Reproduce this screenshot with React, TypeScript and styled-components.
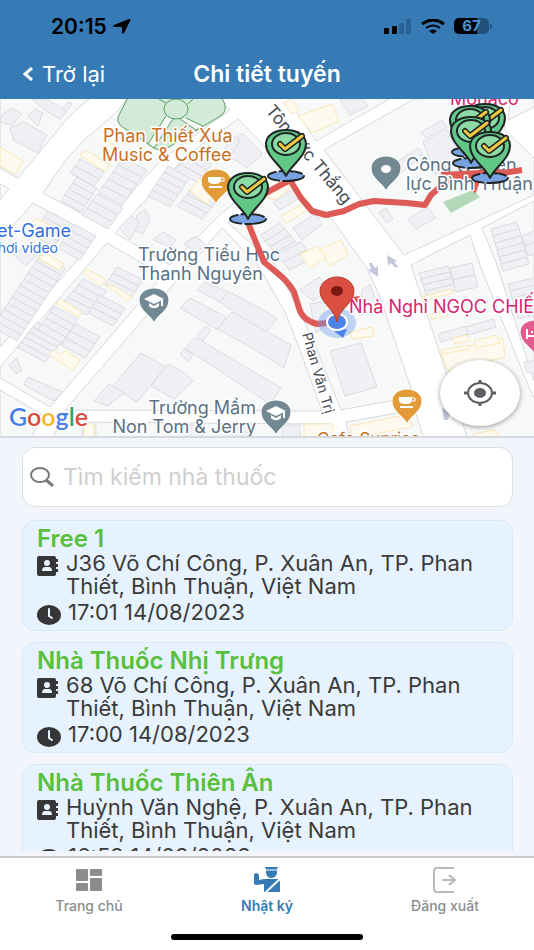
import React from "react";
import styled, { createGlobalStyle } from "styled-components";

const GlobalStyle = createGlobalStyle`
  *, *::before, *::after { box-sizing: border-box; }
  body { margin: 0; background: #f2f6fc; }
  body, button, input { font-family: Inter, "Noto Sans", sans-serif; }
  h1, h2, p { margin: 0; }
`;

const Screen = styled.div`
  display: grid;
  grid-template-rows: auto minmax(0, 339fr) minmax(0, 418fr) auto;
  height: 100vh;
  overflow: hidden;
  background: #f2f6fc;
`;

/* ---------- top ---------- */

const TopBar = styled.header`
  background: #367ab6;
  color: #fff;
`;

const StatusBar = styled.div`
  display: flex;
  align-items: center;
  justify-content: space-between;
  height: 52px;
  padding: 0 42px 0 51px;
  color: #000;
`;

const StatusGroup = styled.div<{ $gap: number }>`
  display: flex;
  align-items: center;
  gap: ${(p) => p.$gap}px;
`;

const Clock = styled.span`
  font-size: 21px;
  font-weight: 600;
`;

const Battery = styled.div`
  display: flex;
  align-items: center;
  gap: 1px;
`;

const BatteryBody = styled.div`
  width: 35px;
  height: 16px;
  border-radius: 5px;
  background: linear-gradient(90deg, #000 67%, #22527b 67%);
  color: #4a93d2;
  font-size: 15px;
  font-weight: 700;
  line-height: 16px;
  text-align: center;
`;

const BatteryTip = styled.div`
  width: 2px;
  height: 5px;
  border-radius: 0 2px 2px 0;
  background: #22527b;
`;

const TitleBar = styled.div`
  display: grid;
  grid-template-columns: 1fr auto 1fr;
  align-items: center;
  height: 47px;
  padding: 0 22px 4px;
`;

const BackButton = styled.button`
  display: flex;
  align-items: center;
  justify-self: start;
  gap: 8px;
  padding: 0;
  border: 0;
  background: none;
  color: #fff;
  font-size: 22px;
  line-height: 26px;
`;

const PageTitle = styled.h1`
  font-size: 23px;
  font-weight: 600;
  line-height: 26px;
`;

/* ---------- map ---------- */

const MapArea = styled.section`
  position: relative;
  overflow: hidden;
  border-bottom: 2px solid #d6d9dc;
  background: #fff;
`;

const MapDrawing = styled.svg`
  display: block;
  width: 100%;
  height: 100%;
`;

const LocateButton = styled.button`
  position: absolute;
  right: 14px;
  bottom: 10px;
  display: flex;
  align-items: center;
  justify-content: center;
  width: 80px;
  height: 66px;
  padding: 0;
  border: 0;
  border-radius: 50%;
  background: #fff;
  box-shadow: 0 1px 5px rgba(0, 0, 0, 0.4);
`;

const Label = styled.text<{ $color: string; $size?: number; $weight?: number }>`
  fill: ${(p) => p.$color};
  font-family: Inter, "Noto Sans", sans-serif;
  font-size: ${(p) => p.$size ?? 18}px;
  font-weight: ${(p) => p.$weight ?? 400};
  stroke: #fff;
  stroke-width: 3px;
  stroke-linejoin: round;
  paint-order: stroke;
`;

const Brand = styled.text`
  font-family: Lato, sans-serif;
  font-size: 25px;
  font-weight: 600;
  stroke: #fff;
  stroke-width: 3px;
  paint-order: stroke;
`;

const blocks = [
  "0,90 100,90 75,111 63,124 18,178 0,168",
  "0,184 9,189 0,200",
  "43,193 65,161 83,141 118,111 133,90 205,90 230,110 187,141 160,161 133,191 105,226",
  "238,119 187,155 115,233 170,265 222,213 283,165",
  "290,180 228,223 275,265 300,312 315,345 341,410 411,397 411,388 379,295 367,268 331,218 314,213",
  "65,410 222,228 258,265 285,312 300,350 322,411",
  "33,203 95,236 73,265 0,347 0,240",
  "107,243 163,275 50,407 0,378 0,367",
  "0,390 43,415 30,440 0,440",
  "60,422 330,424 334,440 52,440",
  "346,422 415,410 424,440 350,440",
  "282,90 316,141 405,90",
  "324,150 414,99 500,96 505,130 534,158 534,195 404,255",
  "512,90 534,90 534,107 508,120",
  "411,265 470,235 481,268 528,385 540,410 540,440 468,440",
  "482,228 534,201 534,381 497,265",
];

type Terrace = [number, number, number, number, number, number, number];

/* x, y of the first corner, length vector, step vector, count */
const terraces: Terrace[] = [
  [61, 201, 20, 11, 4, -6, 4],
  [70, 173, 24, 13, 5, -7, 2],
  [82, 215, 26, 14, 5, -7, 3],
  [98, 193, 24, 12, 5, -7, 5],
  [148, 196, 22, 11, 4, -6, 5],
  [177, 206, 25, 13, 5, -6, 3],
  [175, 170, 22, 12, 5, -6, 3],
  [17, 347, 28, 15, 4, -5, 5],
  [38, 330, 24, 13, 4, -6, 4],
  [63, 303, 24, 12, 5, -6, 4],
  [88, 313, 25, 13, 4, -6, 3],
  [61, 345, 24, 13, 5, -7, 3],
  [105, 285, 26, 13, 4, -6, 3],
  [-8, 327, 25, 14, 4, -6, 12],
  [32, 235, 22, 12, 4, -6, 4],
  [58, 248, 22, 12, 4, -6, 4],
  [260, 235, 20, -12, 5, 6, 4],
  [277, 254, 24, -12, 6, 8, 2],
  [419, 273, 29, -7, 2, 6, 4],
  [450, 268, 22, -5, 3, 12, 2],
  [491, 229, 26, -7, 2, 7, 6],
  [508, 284, 26, -6, 2, 7, 5],
  [522, 236, 20, -8, 3, 10, 2],
  [438, 334, 28, -8, 3, 8, 1],
  [466, 327, 27, -8, 3, 8, 1],
];

const buildings = [
  "10,128 24,122 47,135 38,153 14,141",
  "2,115 12,108 22,114 12,125 0,122",
  "28,117 35,109 43,113 38,126",
  "32,99 46,99 67,111 60,119 48,112",
  "62,109 68,102 72,104 66,112",
  "232,142 242,133 263,154 247,168 231,157",
  "225,148 232,135 240,140 232,154",
  "137,215 145,209 150,219 143,234 135,231",
  "119,228 131,216 139,222 130,240",
  "153,240 163,232 176,240 170,247",
  "421,132 442,120 447,127 426,138",
  "423,142 447,129 465,168 437,178",
  "394,164 418,148 423,155 397,176",
  "379,212 386,208 393,219 387,223",
  "408,219 428,207 436,218 416,229",
  "340,99 362,99 368,106 350,115",
  "273,203 291,190 301,197 280,210",
  "293,228 315,214 322,224 302,240",
  "300,290 319,277 330,290 313,301",
  "330,351 361,343 377,387 345,396",
  "362,290 370,284 379,310 360,315",
  "310,304 333,300 338,317 316,333",
  "113,386 141,353 166,367 137,402",
  "151,386 168,364 183,372 193,381 174,399",
  "94,401 109,384 124,393 108,406",
  "180,308 190,298 226,317 218,330",
  "197,290 205,282 228,292 220,302",
  "220,302 228,292 240,297 277,318 264,335",
  "218,329 232,312 291,345 284,368 252,348",
  "185,348 195,337 281,388 270,404",
  "197,335 206,326 211,330 203,341",
  "180,354 184,349 193,354 189,362",
  "9,365 16,358 22,370 16,374",
  "28,377 62,392 54,401 24,385",
  "14,255 30,242 42,251 25,266",
  "184,244 196,236 206,245 196,253",
  "84,425 96,425 96,440 80,440",
  "186,425 204,425 204,440 186,440",
  "226,425 248,425 248,440 226,440",
  "282,425 300,425 300,440 282,440",
  "524,362 540,360 540,375 526,372",
];

const parcels = [
  "0,147 23,161 15,174 0,166",
  "80,155 86,150 110,165 104,171",
  "101,146 107,141 120,148 114,154",
  "190,191 199,178 216,190 207,204",
  "298,116 332,104 339,121 312,133",
  "283,103 292,99 299,110 292,114",
  "266,197 284,182 290,188 275,200",
  "281,216 303,204 308,210 286,223",
  "318,250 341,240 348,255 330,266",
  "300,254 318,246 326,258 310,268",
  "83,273 87,269 106,280 102,286",
  "56,303 60,299 82,312 79,317",
  "107,286 112,285 132,297 128,301",
  "49,355 54,350 60,355 66,351 80,360 73,370",
  "30,225 36,218 51,226 46,233",
  "38,258 45,253 64,264 59,270",
  "350,332 372,327 374,336 352,339",
  "422,297 451,289 453,293 424,300",
  "430,315 446,311 448,316 432,319",
  "441,353 503,338 505,357 448,371",
  "441,350 469,345 469,349 443,354",
  "474,341 497,335 500,343 476,348",
  "453,338 467,335 469,341 455,344",
  "350,426 410,414 412,427 353,438",
  "84,424 94,424 93,440 84,440",
  "304,424 333,424 333,440 304,440",
  "473,434 495,430 502,440 475,440",
];

const terraceUnits = terraces.flatMap(([x, y, ux, uy, vx, vy, n]) =>
  Array.from({ length: n }, (_, i) => {
    const ax = x + vx * i;
    const ay = y + vy * i;
    return `${ax},${ay} ${ax + ux},${ay + uy} ${ax + ux + vx},${ay + uy + vy} ${ax + vx},${ay + vy}`;
  }),
);

const visits: [number, number][] = [
  [485, 119],
  [470, 121],
  [471, 132],
  [248, 188],
  [286, 145],
  [490, 147],
];

function VisitPin({ x, y }: { x: number; y: number }) {
  return (
    <g transform={`translate(${x} ${y})`} stroke="#1e2524" strokeWidth="2" strokeLinejoin="round" strokeLinecap="round">
      <ellipse cx="0" cy="31" rx="18" ry="5" fill="#78a2e2" strokeDasharray="22 4" />
      <path d="M0 31C-4 21-20 12-20-1C-20-9-12-15 0-15S20-9 20-1C20 12 4 21 0 31Z" fill="#62c887" />
      <ellipse cx="0" cy="-1" rx="14" ry="11" fill="#8cdaa5" />
      <path d="M-6-1L-1 4L16-9" fill="none" strokeWidth="6" />
      <path d="M-6-1L-1 4L16-9" fill="none" stroke="#f1c843" strokeWidth="3" />
    </g>
  );
}

function PlacePin({ x, y, color, children }: { x: number; y: number; color: string; children?: React.ReactNode }) {
  return (
    <g transform={`translate(${x} ${y})`}>
      <path
        d="M0 22C-3 14-15 10-15-1C-15-8-8-13 0-13S15-8 15-1C15 10 3 14 0 22Z"
        fill={color}
        stroke="#fff"
        strokeWidth="1"
      />
      {children}
    </g>
  );
}

const cup = (
  <g fill="none" stroke="#fff">
    <path d="M-8-5H5V-2C5 1 2 2-1 2H-2C-5 2-8 1-8-2Z" fill="#fff" stroke="none" />
    <path d="M4-4H8V-1H4" strokeWidth="1" />
    <path d="M-7 5H6" strokeWidth="2" />
  </g>
);

const cap = (
  <g fill="#fff">
    <path d="M-10-2L0-7L10-2L0 3Z" />
    <path d="M-5 2L0 5L5 2V5C2 8-2 8-5 5Z" />
    <path d="M7-1H9V5H7Z" />
  </g>
);

function RouteMap() {
  const slate = "#5a7183";
  const orange = "#c8701f";
  return (
    <MapDrawing viewBox="0 99 534 337" preserveAspectRatio="xMidYMid slice" role="img" aria-label="Bản đồ tuyến">
      <rect x="-200" y="-200" width="1000" height="1000" fill="#fff" />
      <g fill="#f7f9f9" stroke="#d6d8df" strokeWidth="1">
        {blocks.map((p) => (
          <polygon key={p} points={p} />
        ))}
      </g>
      <path d="M132 90L120 113Q114 122 124 128L154 148Q160 152 169 147L222 115Q228 109 223 100L218 90Z" fill="#d3ead9" />
      <g fill="#f7f9f9" stroke="#559e60" strokeWidth="1">
        <path d="M132 90L120 113Q114 122 124 128L154 148Q160 152 169 147L222 115Q228 109 223 100L218 90Z" fill="none" />
        <path d="M154 96L166 103M186 118L203 126L196 130L180 119M188 104L202 90M166 116L148 144L154 148L173 119" />
        <ellipse cx="176" cy="109" rx="12" ry="10" fill="#d3ead9" />
      </g>
      <g fill="#eff0f3" stroke="#dadce0" strokeWidth="1">
        {[...terraceUnits, ...buildings].map((p) => (
          <polygon key={p} points={p} />
        ))}
      </g>
      <g fill="#fffaf0" stroke="#fae6b4" strokeWidth="1">
        {parcels.map((p) => (
          <polygon key={p} points={p} />
        ))}
      </g>
      <polygon points="443,202 473,190 480,197 451,213" fill="#b2d8b8" />
      <g fill="#c2c8dc">
        <path d="M387 255L397 261L394 262L398 266L396 268L391 263L388 266Z" />
        <path d="M378 277L368 270L371 269L369 263L372 263L375 268L378 266Z" />
        <path d="M442 408L450 412L448 420L444 420Z" />
      </g>

      <Label $color="#454a50" $size={17} transform="translate(265 111) rotate(50)">
        Tôn Đức Thắng
      </Label>
      <Label $color="#454a50" $size={14} transform="translate(302 334) rotate(74)">
        Phan Văn Trị
      </Label>
      <Label $color={orange} x="103" y="142">Phan Thiết Xưa</Label>
      <Label $color={orange} x="102" y="161">Music &amp; Coffee</Label>
      <Label $color={slate} x="138" y="261">Trường Tiểu Học</Label>
      <Label $color={slate} x="138" y="280">Thanh Nguyên</Label>
      <Label $color={slate} x="256" y="414" textAnchor="end">Trường Mầm</Label>
      <Label $color={slate} x="256" y="433" textAnchor="end">Non Tom &amp; Jerry</Label>
      <Label $color="#326fe0" x="71" y="237" textAnchor="end">Net-Game</Label>
      <Label $color="#326fe0" $size={14} x="58" y="253" textAnchor="end">Chơi video</Label>
      <Label $color={orange} $size={17} x="317" y="445">Cafe Sunrise</Label>
      <Label $color="#d6246e" x="450" y="105">Monaco</Label>
      <Label $color={slate} x="406" y="171">Công ty Điện</Label>

      <g fill="none" stroke="#de5a57" strokeWidth="6" strokeLinejoin="round">
        <path d="M337 322L317 324Q302 320 299 308L294 292Q288 281 276 272L264 262L246 218L264 194L290 180L301 198L312 211L326 215L344 211L359 204L374 201L407 203L425 205L431 195L441 186L464 176L490 175L522 170" />
        <path d="M441 175L500 172M478 178L473 192M335 318V302L360 299" />
      </g>

      <Label $color={slate} x="406" y="190">lực Bình Thuận</Label>

      <PlacePin x={216} y={182} color="#e29b37">{cup}</PlacePin>
      <PlacePin x={407} y={402} color="#e29b37">{cup}</PlacePin>
      <PlacePin x={154} y={301} color="#728994">{cap}</PlacePin>
      <PlacePin x={276} y={413} color="#728994">{cap}</PlacePin>
      <PlacePin x={386} y={169} color="#728994">
        <ellipse cx="0" cy="0" rx="5" ry="4" fill="#fff" />
      </PlacePin>
      <PlacePin x={535} y={333} color="#e05c90">
        <path d="M-8-4V6M-8 3H6M-4-1H-2" stroke="#fff" strokeWidth="2" />
      </PlacePin>

      {visits.map(([x, y]) => (
        <VisitPin key={`${x}-${y}`} x={x} y={y} />
      ))}

      <ellipse cx="337" cy="323" rx="19" ry="15" fill="#6c9cf2" opacity="0.4" />
      <path d="M334 331L347 329L343 338Z" fill="#4c83ea" />
      <ellipse cx="337" cy="322" rx="10" ry="8" fill="#4c83ea" stroke="#fff" strokeWidth="2" />
      <Label $color="#d6246e" x="349" y="313">Nhà Nghỉ NGỌC CHIẾN</Label>
      <path d="M337 322C335 309 320 303 320 291C320 283 328 277 337 277S354 283 354 291C354 303 339 309 337 322Z" fill="#d94f40" stroke="#b63a2e" strokeWidth="1" />
      <ellipse cx="337" cy="291" rx="6" ry="5" fill="#7a1913" />

      <Brand x="9" y="426">
        <tspan fill="#4a7fe8">G</tspan>
        <tspan fill="#dc4a3d">o</tspan>
        <tspan fill="#f1b92a">o</tspan>
        <tspan fill="#4a7fe8">g</tspan>
        <tspan fill="#3ba258">l</tspan>
        <tspan fill="#dc4a3d">e</tspan>
      </Brand>
    </MapDrawing>
  );
}

/* ---------- list ---------- */

const ListPane = styled.main`
  display: flex;
  flex-direction: column;
  gap: 13px;
  padding: 9px 21px 5px 22px;
`;

const SearchBox = styled.label`
  display: flex;
  flex: none;
  align-items: center;
  gap: 9px;
  height: 60px;
  padding: 0 7px;
  border: 1px solid #dfdfe1;
  border-radius: 13px;
  background: #fff;
`;

const SearchInput = styled.input`
  flex: 1;
  min-width: 0;
  padding: 0;
  border: 0;
  outline: 0;
  background: none;
  color: #3c3c3c;
  font-size: 23px;
  &::placeholder { color: #cfcfcf; opacity: 1; }
`;

const Cards = styled.ul`
  display: flex;
  flex: 1;
  flex-direction: column;
  gap: 11px;
  min-height: 0;
  margin: 0;
  padding: 0;
  overflow-y: auto;
  scrollbar-width: none;
  list-style: none;
`;

const Card = styled.li`
  flex: none;
  padding: 5px 14px;
  border: 1px solid #d4eafb;
  border-radius: 13px;
  background: #e6f3fe;
`;

const CardTitle = styled.h2`
  color: #5abf3d;
  font-size: 24px;
  font-weight: 600;
  line-height: 26px;
`;

const CardRow = styled.div<{ $gap: number }>`
  display: flex;
  align-items: flex-start;
  gap: ${(p) => p.$gap}px;
  color: #3a3a3a;
  font-size: 22px;
  line-height: 23px;
  & > svg { flex: none; margin-top: 4px; }
  & + & { margin-top: 3px; }
`;

function AddressIcon() {
  return (
    <svg width="21" height="20" viewBox="0 0 21 20" aria-hidden="true">
      <rect width="19" height="20" rx="2" fill="#363638" />
      <path d="M19 3h2v3h-2zM19 8h2v3h-2zM19 13h2v3h-2z" fill="#363638" />
      <ellipse cx="10" cy="7" rx="3" ry="3" fill="#e6f3fe" />
      <path d="M5 15Q5 11 8 11H12Q15 11 15 15Z" fill="#e6f3fe" />
    </svg>
  );
}

function TimeIcon() {
  return (
    <svg width="24" height="20" viewBox="0 0 24 20" aria-hidden="true">
      <ellipse cx="12" cy="10" rx="12" ry="10" fill="#363638" />
      <path d="M12 4V11L15 13" fill="none" stroke="#e6f3fe" strokeWidth="2" strokeLinecap="round" />
    </svg>
  );
}

const stops = [
  { name: "Free 1", address: "J36 Võ Chí Công, P. Xuân An, TP. Phan Thiết, Bình Thuận, Việt Nam", time: "17:01 14/08/2023" },
  { name: "Nhà Thuốc Nhị Trưng", address: "68 Võ Chí Công, P. Xuân An, TP. Phan Thiết, Bình Thuận, Việt Nam", time: "17:00 14/08/2023" },
  { name: "Nhà Thuốc Thiên Ân", address: "Huỳnh Văn Nghệ, P. Xuân An, TP. Phan Thiết, Bình Thuận, Việt Nam", time: "16:59 14/08/2023" },
];

/* ---------- bottom ---------- */

const BottomBar = styled.footer`
  border-top: 2px solid #c9ccd2;
  background: #fff;
`;

const Tabs = styled.nav`
  display: grid;
  grid-template-columns: repeat(3, 1fr);
  padding-top: 9px;
`;

const Tab = styled.a<{ $active?: boolean }>`
  display: flex;
  flex-direction: column;
  align-items: center;
  gap: 4px;
  color: ${(p) => (p.$active ? "#367ab6" : "#8c8c8c")};
  font-size: 14px;
  font-weight: ${(p) => (p.$active ? 600 : 500)};
  line-height: 18px;
  text-decoration: none;
`;

const HomeIndicator = styled.div`
  width: 36%;
  height: 6px;
  margin: 19px auto 10px;
  border-radius: 3px;
  background: #000;
`;

export default function App() {
  return (
    <Screen>
      <GlobalStyle />
      <TopBar>
        <StatusBar>
          <StatusGroup $gap={6}>
            <Clock>20:15</Clock>
            <svg width="18" height="15" viewBox="0 0 18 15" aria-hidden="true">
              <path d="M16 0Q18 0 17 2L11 14Q9 16 9 13V8H1Q-1 7 1 6Z" fill="#000" />
            </svg>
          </StatusGroup>
          <StatusGroup $gap={9}>
            <svg width="28" height="15" viewBox="0 0 28 15" aria-hidden="true">
              <rect x="0" y="9" width="5" height="6" rx="1" />
              <rect x="8" y="7" width="5" height="8" rx="1" />
              <rect x="15" y="4" width="5" height="11" rx="1" fill="#2a6393" />
              <rect x="22" y="0" width="5" height="15" rx="1" fill="#2a6393" />
            </svg>
            <svg width="24" height="15" viewBox="0 0 24 15" aria-hidden="true" fill="none" stroke="#000">
              <path d="M1 5Q12-3 23 5" strokeWidth="3" />
              <path d="M5 9Q12 4 19 9" strokeWidth="2" />
              <path d="M8 12Q12 9 16 12L12 15Z" fill="#000" stroke="none" />
            </svg>
            <Battery>
              <BatteryBody>67</BatteryBody>
              <BatteryTip />
            </Battery>
          </StatusGroup>
        </StatusBar>
        <TitleBar>
          <BackButton type="button">
            <svg width="12" height="14" viewBox="0 0 12 14" aria-hidden="true">
              <path d="M10 1L3 7L10 13" fill="none" stroke="#fff" strokeWidth="3" />
            </svg>
            Trở lại
          </BackButton>
          <PageTitle>Chi tiết tuyến</PageTitle>
        </TitleBar>
      </TopBar>

      <MapArea>
        <RouteMap />
        <LocateButton type="button" aria-label="Vị trí của tôi">
          <svg width="32" height="26" viewBox="0 0 32 26" aria-hidden="true" fill="none" stroke="#5c5f63" strokeWidth="2">
            <ellipse cx="16" cy="13" rx="12" ry="10" />
            <path d="M16 0V4M16 22V26M0 13H5M27 13H32" strokeWidth="3" />
            <ellipse cx="16" cy="13" rx="6" ry="5" fill="#5c5f63" stroke="none" />
          </svg>
        </LocateButton>
      </MapArea>

      <ListPane>
        <SearchBox>
          <svg width="24" height="20" viewBox="0 0 24 20" aria-hidden="true" fill="none" stroke="#777a7d">
            <ellipse cx="10" cy="8" rx="9" ry="7" strokeWidth="2" />
            <path d="M16 13L23 19" strokeWidth="3" />
          </svg>
          <SearchInput type="search" placeholder="Tìm kiếm nhà thuốc" aria-label="Tìm kiếm nhà thuốc" />
        </SearchBox>
        <Cards>
          {stops.map((s) => (
            <Card key={s.name}>
              <CardTitle>{s.name}</CardTitle>
              <CardRow $gap={8}>
                <AddressIcon />
                <p>{s.address}</p>
              </CardRow>
              <CardRow $gap={7}>
                <TimeIcon />
                <time>{s.time}</time>
              </CardRow>
            </Card>
          ))}
        </Cards>
      </ListPane>

      <BottomBar>
        <Tabs>
          <Tab href="#home">
            <svg width="26" height="26" viewBox="0 0 26 26" aria-hidden="true" fill="#8c8c8c">
              <rect x="0" y="2" width="12" height="12" rx="1" />
              <rect x="14" y="2" width="12" height="7" rx="1" />
              <rect x="0" y="16" width="12" height="8" rx="1" />
              <rect x="14" y="11" width="12" height="13" rx="1" />
            </svg>
            Trang chủ
          </Tab>
          <Tab href="#diary" $active>
            <svg width="26" height="26" viewBox="0 0 26 26" aria-hidden="true" fill="#367ab6">
              <path d="M11 0H24L23 2H12Z" />
              <path d="M12 2H23V4H12Z" opacity="0.5" />
              <path d="M12 4H23V6Q22 11 17 11Q13 11 12 6Z" />
              <path d="M0 8Q0 6 2 6T5 8V13L10 12H24Q26 13 26 15V25H10V17L2 18Q0 18 0 16Z" />
              <path d="M11 26L26 12" stroke="#fff" strokeWidth="2" />
            </svg>
            Nhật ký
          </Tab>
          <Tab href="#logout">
            <svg width="24" height="26" viewBox="0 0 24 26" aria-hidden="true" fill="none" stroke="#bababa" strokeWidth="2">
              <path d="M21 1H4Q1 1 1 4V22Q1 25 4 25H21" />
              <path d="M9 13H22M16 8L22 13L16 18" />
            </svg>
            Đăng xuất
          </Tab>
        </Tabs>
        <HomeIndicator />
      </BottomBar>
    </Screen>
  );
}
